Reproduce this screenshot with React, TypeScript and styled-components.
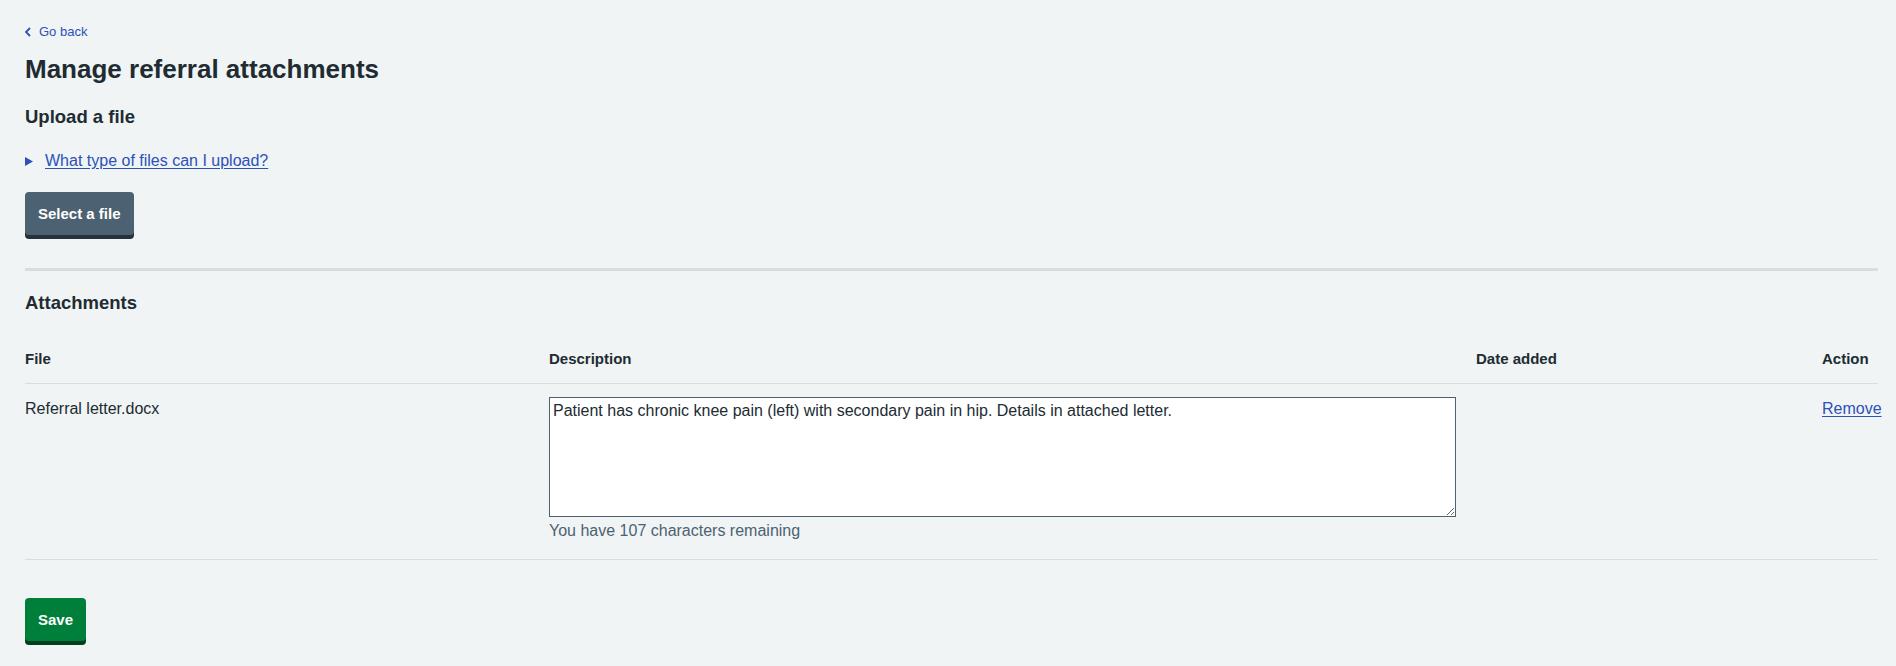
import styled, { createGlobalStyle } from "styled-components";

const GlobalStyle = createGlobalStyle`
  body {
    margin: 0;
    background: #f0f4f5;
    color: #212b32;
    font-family: "Liberation Sans", Arial, sans-serif;
  }
`;

const Page = styled.main`
  padding: 22px 18px 24px 25px;
`;

const BackLink = styled.a`
  display: inline-flex;
  align-items: center;
  gap: 8px;
  font-size: 13px;
  line-height: 20px;
  color: #2c51b8;
  text-decoration: none;
`;

const Title = styled.h1`
  margin: 11px 0 0;
  font-size: 26px;
  line-height: 32px;
  font-weight: 700;
`;

const SectionTitle = styled.h2`
  margin: 20px 0 0;
  font-size: 18.5px;
  line-height: 24px;
  font-weight: 700;
`;

const Details = styled.details`
  margin-top: 20px;

  summary {
    display: flex;
    align-items: center;
    gap: 12px;
    list-style: none;
    cursor: pointer;
    font-size: 16px;
    line-height: 24px;
    color: #2c51b8;

    &::-webkit-details-marker {
      display: none;
    }

    &::marker {
      content: "";
    }
  }

  .details__text {
    text-decoration: underline;
    text-underline-offset: 2px;
  }
`;

const Button = styled.button<{ $variant?: "secondary" | "primary" }>`
  display: block;
  margin: ${({ $variant }) => ($variant === "primary" ? "38px 0 4px" : "19px 0 4px")};
  padding: 10px 13px 9px;
  border: 0;
  border-radius: 4px;
  font-family: inherit;
  font-size: 15px;
  line-height: 24px;
  font-weight: 700;
  color: #fff;
  cursor: pointer;
  background: ${({ $variant }) => ($variant === "primary" ? "#007f3b" : "#4c6272")};
  box-shadow: 0 4px 0 ${({ $variant }) => ($variant === "primary" ? "#00401e" : "#263139")};
`;

const Divider = styled.hr`
  height: 3px;
  margin: 33px 0 0;
  border: 0;
  background: #d8dde0;
`;

const Table = styled.table`
  width: 100%;
  margin-top: 20px;
  border-collapse: collapse;
  table-layout: fixed;

  th,
  td {
    padding: 12px 20px 12px 0;
    border-bottom: 1px solid #d8dde0;
    text-align: left;
    vertical-align: top;
  }

  th:last-child,
  td:last-child {
    padding-right: 0;
    white-space: nowrap;
  }

  th {
    font-size: 15px;
    line-height: 24px;
    font-weight: 700;
  }

  td {
    padding-top: 13px;
    padding-bottom: 16px;
    font-size: 16px;
    line-height: 24px;
  }
`;

const Textarea = styled.textarea`
  display: block;
  box-sizing: border-box;
  width: 100%;
  height: 120px;
  margin: 0;
  padding: 3px;
  border: 1px solid #4c6272;
  background: #fff;
  color: #212b32;
  font-family: inherit;
  font-size: 16px;
  line-height: 20px;
`;

const Hint = styled.div`
  margin-top: 2px;
  color: #4c6272;
  font-size: 16px;
  line-height: 24px;
`;

const TextLink = styled.a`
  color: #2c51b8;
  text-decoration: underline;
  text-underline-offset: 2px;
`;

function ChevronLeft() {
  return (
    <svg width="6" height="10" viewBox="0 0 6 10" aria-hidden="true">
      <path d="M5 1 1 5l4 4" fill="none" stroke="currentColor" strokeWidth="1.8" />
    </svg>
  );
}

function TriangleRight() {
  return (
    <svg width="8" height="9" viewBox="0 0 8 9" aria-hidden="true">
      <path d="M0 0 8 4.5 0 9Z" fill="currentColor" />
    </svg>
  );
}

export default function App() {
  return (
    <>
      <GlobalStyle />
      <Page>
        <BackLink href="#">
          <ChevronLeft />
          Go back
        </BackLink>
        <Title>Manage referral attachments</Title>

        <SectionTitle>Upload a file</SectionTitle>
        <Details>
          <summary>
            <TriangleRight />
            <span className="details__text">What type of files can I upload?</span>
          </summary>
        </Details>
        <Button $variant="secondary">Select a file</Button>

        <Divider />

        <SectionTitle>Attachments</SectionTitle>
        <Table>
          <colgroup>
            <col style={{ width: 524 }} />
            <col style={{ width: 927 }} />
            <col style={{ width: 346 }} />
            <col />
          </colgroup>
          <thead>
            <tr>
              <th>File</th>
              <th>Description</th>
              <th>Date added</th>
              <th>Action</th>
            </tr>
          </thead>
          <tbody>
            <tr>
              <td>Referral letter.docx</td>
              <td>
                <Textarea defaultValue="Patient has chronic knee pain (left) with secondary pain in hip. Details in attached letter." />
                <Hint>You have 107 characters remaining</Hint>
              </td>
              <td></td>
              <td>
                <TextLink href="#">Remove</TextLink>
              </td>
            </tr>
          </tbody>
        </Table>

        <Button $variant="primary">Save</Button>
      </Page>
    </>
  );
}
